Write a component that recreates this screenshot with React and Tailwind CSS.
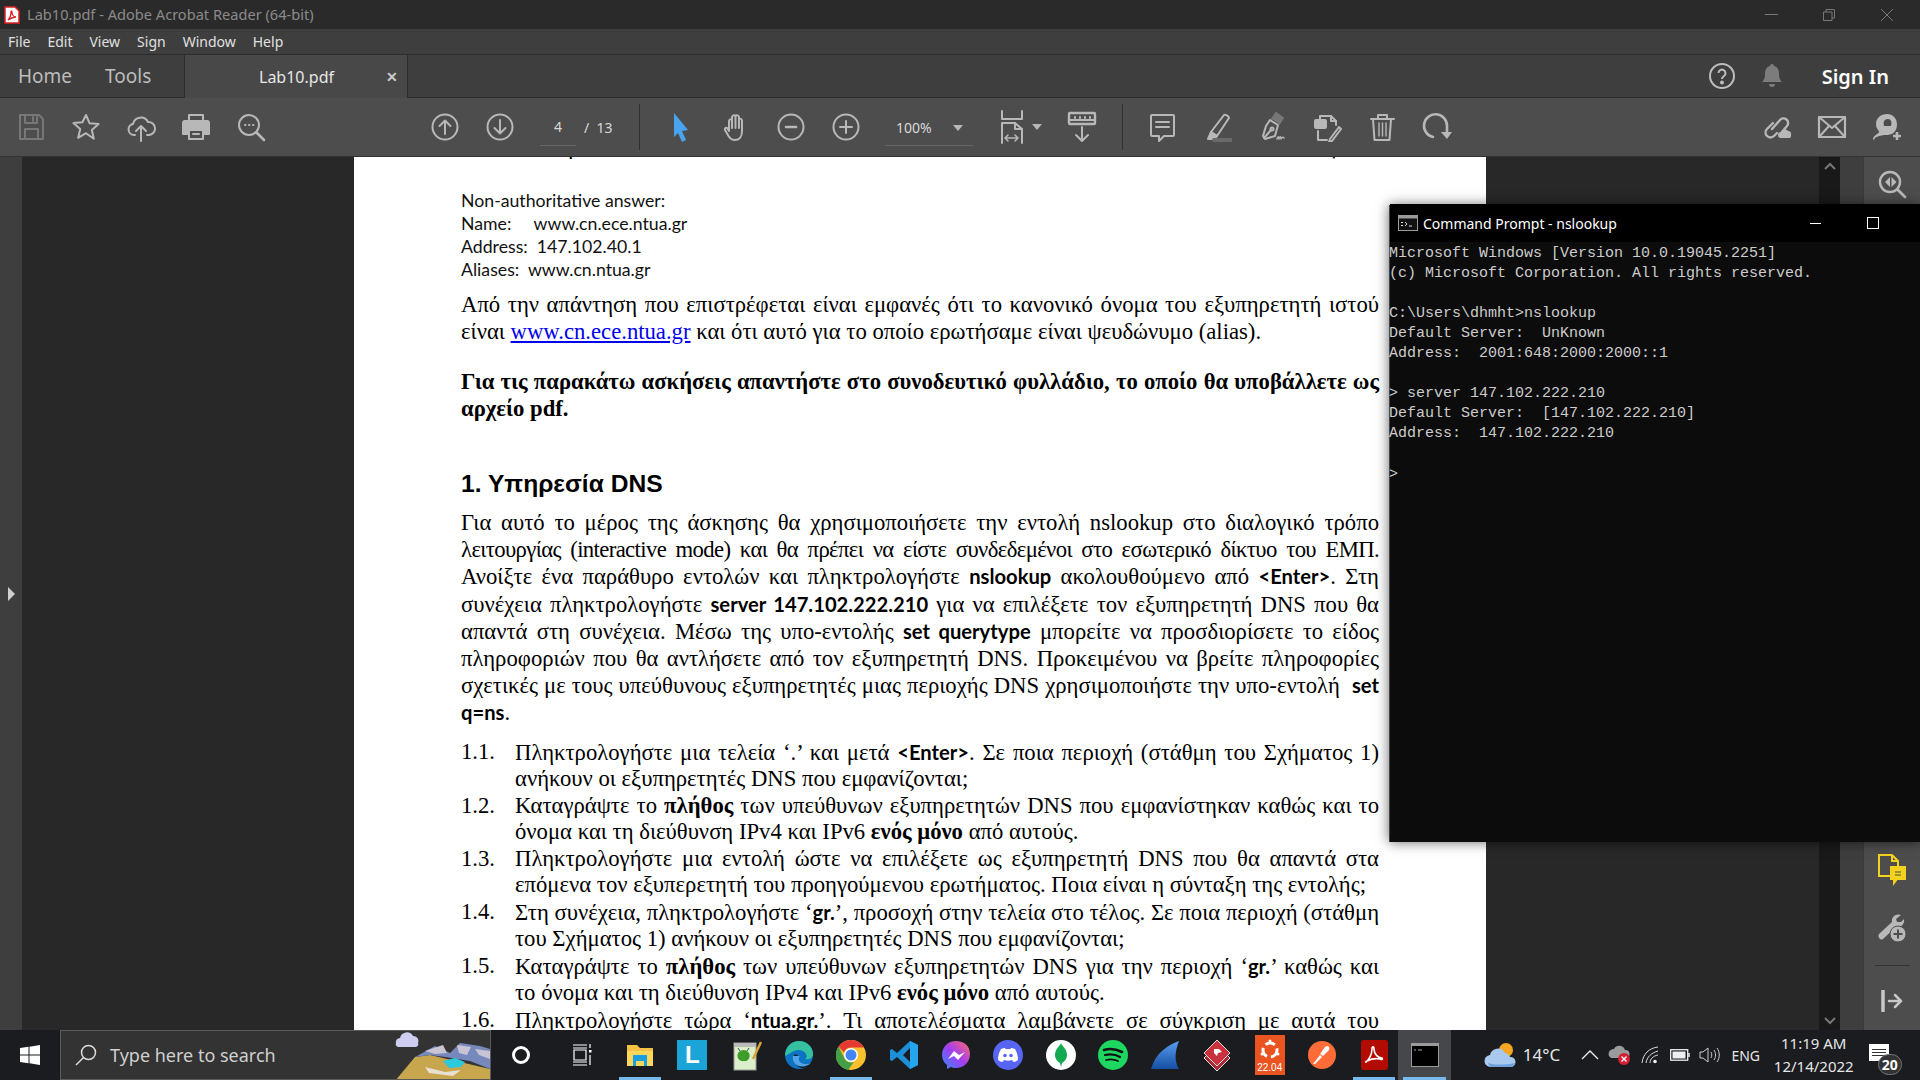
import React from "react";

const I = ({ s = 30, c = "#b8b8b8", w = 2, children, vb = "0 0 30 30", fill = "none" }) => (
  <svg width={s} height={s} viewBox={vb} fill={fill} stroke={c} strokeWidth={w} strokeLinecap="round" strokeLinejoin="round">{children}</svg>
);

const Slot = ({ children }) => <div className="w-[55px] shrink-0 flex items-center justify-center">{children}</div>;
const Sep = ({ cls }) => <div className={"w-px h-[46px] bg-[#303030] shrink-0 " + (cls || "")} />;

const Save = () => <I c="#777"><path d="M4 3h19l4 4v20H4z" /><path d="M9 3v8h12V3M9 27V17h13v10" /><path d="M17 5v4" /></I>;
const Star = () => <I><path d="M15 3l3.600 8.300 9 .8-6.800 5.900 2 8.800L15 21.200 7.200 25.800l2-8.800-6.800-5.900 9-.8z" /></I>;
const Cloud = () => <I><path d="M9 23H8a5.500 5.500 0 0 1-1-10.900A8 8 0 0 1 22 10a6.500 6.500 0 0 1 1 13h-2" /><path d="M15 29V14M10 19l5-5 5 5" /></I>;
const Print = () => (
  <I c="#b8b8b8"><path d="M8 9V3h14v6" /><path fill="#b8b8b8" d="M4 9h22a2 2 0 0 1 2 2v11h-5v-5H7v5H2V11a2 2 0 0 1 2-2z" /><path d="M8 18h14v9H8z" /><path d="M12 22h6" /></I>
);
const Find = () => <I><circle cx="13" cy="13" r="10" /><path d="M20.500 20.500L28 28" strokeWidth="2.600" /><path d="M9 13h.5M13 13h.5M17 13h.5" /></I>;
const Up = () => <I><circle cx="15" cy="15" r="12.500" /><path d="M15 22V8.500M9.500 14L15 8.500l5.500 5.500" /></I>;
const Down = () => <I><circle cx="15" cy="15" r="12.500" /><path d="M15 8v13.500M9.500 16l5.500 5.500 5.500-5.500" /></I>;
const Arrow = () => <svg width="20" height="30" viewBox="0 0 20 30"><path d="M3 1l14 17-6 1 4 9-4 2-4-9-4 4z" fill="#4aa3f0" /></svg>;
const Hand = () => <I><path d="M8 18V9a2 2 0 0 1 3-1.500V5a2 2 0 0 1 3.500-1A2 2 0 0 1 18 5v2a2 2 0 0 1 3 1.500V19c0 6-3 9-7 9-3.500 0-5-1.500-6.500-4L4 18c-.8-2 1.500-3 2.500-1.500L8 19" /><path d="M11 7v9M14.500 5v11M18 7v9" /></I>;
const Minus = () => <I><circle cx="15" cy="15" r="12.500" /><path d="M10 15h10" strokeWidth="2.600" /></I>;
const Plus = () => <I><circle cx="15" cy="15" r="12.500" /><path d="M9 15h12M15 9v12" /></I>;
const Fit = () => <I s={34} vb="0 0 34 34"><path d="M4 1v8h20V1" /><path d="M4 13h13l7 6v14M4 13v20" /><path d="M17 13v6h7" /><path d="M7 28h13M10 25l-3 3 3 3M17 25l3 3-3 3" strokeWidth="1.500" /></I>;
const Ruler = () => (
  <I s={34} vb="0 0 34 34"><rect x="4" y="3" width="26" height="11" rx="1" strokeWidth="2.400" /><path d="M4 10h26" /><path d="M10 7v1M15 7v1M20 7v1M25 7v1" /><path d="M17 17v14M11 25l6 6 6-6" /></I>
);
const Comment = () => <I><path d="M5 3h21a1 1 0 0 1 1 1v19a1 1 0 0 1-1 1H17l-5 5v-5H5a1 1 0 0 1-1-1V4a1 1 0 0 1 1-1z" /><path d="M9 10h13M9 15h13" /></I>;
const Highlight = () => <I><path d="M9 20L22 3c1-1 5 1 5 3L15 24z" /><path d="M9 20l6 4-3 3H6z" fill="#b8b8b8" /><path d="M12 28h17" stroke="#6a6a6a" strokeWidth="4" /></I>;
const Sign = () => <I><path d="M13 8l8 5-3 11-10 3-2-3 3-10z" /><path d="M7 26l7-8" /><circle cx="15" cy="17" r="1.500" /><path d="M15 7l4-6 7 5-4 6" fill="#777" stroke="#777" /><path d="M20 27c1-3 2-3 2 0 1-3 2-3 2 0 1-2 2-2 3-1" strokeWidth="1.500" /></I>;
const Stamp = () => <I><path d="M8 8V4h11l5 5v4" /><path d="M19 4v5h5" /><rect x="3" y="8" width="11" height="8" rx="1" fill="#b8b8b8" /><path d="M6 19v9h9" /><path d="M18 27l-1 3 3-1L29 17l-2-2z" /></I>;
const Trash = () => <I><path d="M4 7h23M11 7V3h9v4" /><path d="M6 7l1.500 21h15L24 7" /><path d="M12 11v13M15.500 11v13M19 11v13" strokeWidth="1.400" /></I>;
const Rotate = () => <I><path d="M11 25A11.500 11.500 0 1 1 25 14v7" strokeWidth="2.600" /><path d="M19 20h11l-5 7z" fill="#b8b8b8" stroke="none" /></I>;
const Link = () => <I s={32} vb="0 0 32 32"><path d="M12 12l-6 6a4.500 4.500 0 0 0 7 7l3-3" strokeWidth="2.400" /><path d="M11 18l8-9a4.500 4.500 0 0 1 7 6l-5 6" strokeWidth="2.400" /><path d="M17 24a3 3 0 0 1 3-3 4 4 0 0 1 7-1 3 3 0 0 1 3 4 3 3 0 0 1-1 3H19a3 3 0 0 1-2-3z" fill="#b8b8b8" stroke="none" /></I>;
const Mail = () => <I s={32} vb="0 0 32 32"><rect x="3" y="6" width="26" height="20" strokeWidth="2.200" /><path d="M3 6l13 11L29 6M3 26l10-11M29 26L19 15" /></I>;
const User = () => (
  <svg width="32" height="32" viewBox="0 0 32 32"><path d="M16 3c6 0 10 4 10 11 0 4-2 7-5 9-3 1-6 1-8 1-6 1-9 2-10 5-2-1-1-3 3-6 2-1 3-2 1-4-1-2-2-3-2-6C5 7 10 3 16 3z" fill="#b8b8b8" /><path d="M22 25h8M26 21v8" stroke="#b8b8b8" strokeWidth="2.600" /><path d="M13 15c-1-4 0-7 4-7 3 0 4 3 3 7" fill="#4c4c4c" /></svg>
);

const Caret = () => <div className="w-0 h-0 border-x-[5px] border-x-transparent border-t-[6px] border-t-[#b8b8b8]" />;

const Toolbar = () => (
  <div className="h-[59px] bg-[#4d4d4d] flex items-center pl-[3px] pr-[6px] border-b border-[#333] text-[#d8d8d8] font-['Noto_Sans',sans-serif] shrink-0">
    <Slot><Save /></Slot><Slot><Star /></Slot><Slot><Cloud /></Slot><Slot><Print /></Slot><Slot><Find /></Slot>
    <div className="w-[139px] shrink-0" />
    <Slot><Up /></Slot><Slot><Down /></Slot>
    <div className="w-[36px] ml-[13px] h-[36px] border-b border-[#666] text-center text-[14px] leading-[34px] shrink-0 translate-y-[1px]">4</div>
    <div className="ml-[8px] text-[14px] w-[55px] shrink-0">/&nbsp;&nbsp;13</div>
    <Sep />
    <div className="w-[13px] shrink-0" />
    <Slot><Arrow /></Slot><Slot><Hand /></Slot><Slot><Minus /></Slot><Slot><Plus /></Slot>
    <div className="w-[88px] ml-[12px] h-[36px] border-b border-[#666] flex items-center justify-between pl-[11px] pr-[10px] text-[14px] shrink-0 translate-y-[1px]"><span>100%</span><Caret /></div>
    <div className="w-[25px] shrink-0" />
    <div className="w-[34px] shrink-0 flex justify-center"><Fit /></div>
    <div className="shrink-0"><Caret /></div>
    <div className="w-[15px] shrink-0" />
    <div className="w-[50px] shrink-0 flex justify-center"><Ruler /></div>
    <div className="w-[15px] shrink-0" />
    <Sep />
    <div className="w-[11px] shrink-0" />
    <Slot><Comment /></Slot><Slot><Highlight /></Slot><Slot><Sign /></Slot><Slot><Stamp /></Slot><Slot><Trash /></Slot><Slot><Rotate /></Slot>
    <div className="flex-1" />
    <Slot><Link /></Slot><Slot><Mail /></Slot><Slot><User /></Slot>
  </div>
);

const B = ({ children }) => <span className="font-['Lato',sans-serif] font-bold text-[20.2px]">{children}</span>;

const Line = ({ children, cls }) => <div className={"text-justify [text-align-last:justify] " + (cls || "")}>{children}</div>;

const items = [
  ["1.1.", <>Πληκτρολογήστε μια τελεία ‘.’ και μετά <B>&lt;Enter&gt;</B>. Σε ποια περιοχή (στάθμη του Σχήματος 1) ανήκουν οι εξυπηρετητές DNS που εμφανίζονται;</>],
  ["1.2.", <>Καταγράψτε το <b>πλήθος</b> των υπεύθυνων εξυπηρετητών DNS που εμφανίστηκαν καθώς και το όνομα και τη διεύθυνση IPv4 και IPv6 <b>ενός μόνο</b> από αυτούς.</>],
  ["1.3.", <>Πληκτρολογήστε μια εντολή ώστε να επιλέξετε ως εξυπηρετητή DNS που θα απαντά στα επόμενα τον εξυπερετητή του προηγούμενου ερωτήματος. Ποια είναι η σύνταξη της εντολής;</>],
  ["1.4.", <>Στη συνέχεια, πληκτρολογήστε ‘<B>gr.</B>’, προσοχή στην τελεία στο τέλος. Σε ποια περιοχή (στάθμη του Σχήματος 1) ανήκουν οι εξυπηρετητές DNS που εμφανίζονται;</>],
  ["1.5.", <>Καταγράψτε το <b>πλήθος</b> των υπεύθυνων εξυπηρετητών DNS για την περιοχή ‘<B>gr.</B>’ καθώς και το&nbsp;όνομα και τη διεύθυνση IPv4 και IPv6 <b>ενός μόνο</b> από αυτούς.</>],
  ["1.6.", <>Πληκτρολογήστε τώρα ‘<B>ntua.gr.</B>’. Τι αποτελέσματα λαμβάνετε σε σύγκριση με αυτά του ερωτήματος 1.4;</>],
];

const Page = () => (
  <div className="w-[1132px] shrink-0 h-full bg-white overflow-hidden px-[107px] text-black font-['Liberation_Serif',serif] text-[22.7px]">
    <div className="flex justify-between -mt-[19px] h-[23px] font-bold text-[17px] leading-[23px] font-['Lato',sans-serif]">
      <span>Δίκτυα Υπολογιστών Lab</span><span>Ακ. έτος 2022</span>
    </div>
    <div className="mt-[28px] font-['Lato',sans-serif] text-[17.7px] leading-[23px] text-[#111]">
      <div>Non-authoritative answer:</div>
      <div>Name:&nbsp;&nbsp;&nbsp;&nbsp;&nbsp;www.cn.ece.ntua.gr</div>
      <div>Address:&nbsp;&nbsp;147.102.40.1</div>
      <div>Aliases:&nbsp;&nbsp;www.cn.ntua.gr</div>
    </div>
    <p className="mt-[10px] text-justify leading-[27px]">Από την απάντηση που επιστρέφεται είναι εμφανές ότι το κανονικό όνομα του εξυπηρετητή ιστού είναι <span className="text-[#0000ee] underline">www.cn.ece.ntua.gr</span> και ότι αυτό για το οποίο ερωτήσαμε είναι ψευδώνυμο (alias).</p>
    <p className="mt-[23px] text-justify leading-[27px] font-bold">Για τις παρακάτω ασκήσεις απαντήστε στο συνοδευτικό φυλλάδιο, το οποίο θα υποβάλλετε ως αρχείο pdf.</p>
    <h1 className="mt-[47px] font-['Liberation_Sans',sans-serif] font-bold text-[24.6px] leading-[30px]">1. Υπηρεσία DNS</h1>
    <div className="mt-[10px] leading-[27.2px]">
      <Line>Για αυτό το μέρος της άσκησης θα χρησιμοποιήσετε την εντολή nslookup στο διαλογικό τρόπο</Line>
      <Line cls="tracking-[-0.62px]">λειτουργίας (interactive mode) και θα πρέπει να είστε συνδεδεμένοι στο εσωτερικό δίκτυο του ΕΜΠ.</Line>
      <Line>Ανοίξτε ένα παράθυρο εντολών και πληκτρολογήστε <B>nslookup</B> ακολουθούμενο από <B>&lt;Enter&gt;</B>. Στη</Line>
      <Line>συνέχεια πληκτρολογήστε <B>server 147.102.222.210</B> για να επιλέξετε τον εξυπηρετητή DNS που θα</Line>
      <Line>απαντά στη συνέχεια. Μέσω της υπο-εντολής <B>set querytype</B> μπορείτε να προσδιορίσετε το είδος</Line>
      <Line>πληροφοριών που θα αντλήσετε από τον εξυπηρετητή DNS. Προκειμένου να βρείτε πληροφορίες</Line>
      <Line>σχετικές με τους υπεύθυνους εξυπηρετητές μιας περιοχής DNS χρησιμοποιήστε την υπο-εντολή &nbsp;<B>set</B></Line>
      <div><B>q=ns</B>.</div>
    </div>
    <div className="mt-[12px] leading-[26.5px]">
      {items.map(([n, t]) => (
        <div key={n} className="flex">
          <div className="w-[54px] shrink-0">{n}</div>
          <div className="flex-1 text-justify">{t}</div>
        </div>
      ))}
    </div>
  </div>
);

const Terminal = () => (
  <div className="absolute left-[1389px] top-[205px] w-[531px] h-[637px] bg-[#0c0c0c] shadow-[0_0_12px_rgba(0,0,0,0.6)] border-l border-[#444]">
    <div className="h-[38px] bg-black flex items-center pl-[8px] text-white font-['Noto_Sans',sans-serif] text-[14px] -translate-y-[1px]">
      <svg width="20" height="16" viewBox="0 0 20 16" className="mr-[5px]"><rect x="0.500" y="0.500" width="19" height="15" fill="#111" stroke="#999" /><rect x="1" y="1" width="18" height="2.500" fill="#999" /><path d="M3 7.500h2M3 10.500h2M7 7l2 2-2 2M11 11h3" stroke="#ddd" strokeWidth="1" fill="none" /></svg>
      <span>Command Prompt - nslookup</span>
      <div className="ml-auto w-[11px] h-px bg-white mr-[46px]" />
      <div className="w-[12px] h-[12px] border border-white mr-[41px]" />
    </div>
    <pre className="font-['Liberation_Mono',monospace] text-[15px] leading-[20.05px] text-[#cccccc] mt-[1px] -ml-[1px]">{`Microsoft Windows [Version 10.0.19045.2251]
(c) Microsoft Corporation. All rights reserved.

C:\\Users\\dhmht>nslookup
Default Server:  UnKnown
Address:  2001:648:2000:2000::1

> server 147.102.222.210
Default Server:  [147.102.222.210]
Address:  147.102.222.210

>`}</pre>
  </div>
);

const TB = ({ children, active, bg }) => (
  <div className={"w-[52.3px] shrink-0 h-full relative flex items-center justify-center " + (bg || "")}>
    {children}
    {active && <div className="absolute bottom-0 left-[5px] right-[5px] h-[3px] bg-[#76b9ed]" />}
  </div>
);

const Explorer = () => (
  <svg width="28" height="28" viewBox="0 0 28 28"><path d="M1 4h10l3 3h13v18H1z" fill="#f3c243" /><path d="M1 10h26v15H1z" fill="#fbd75b" /><path d="M7 14h14v11h-3v-5h-8v5H7z" fill="#1b9de2" /><path d="M10 20h8v5h-8z" fill="#fbd75b" /></svg>
);
const LIcon = () => <div className="w-[30px] h-[30px] bg-[#1ba4d8] flex items-center justify-center text-white font-bold text-[24px] leading-none font-['Liberation_Sans',sans-serif]"><span>L</span></div>;
const NotepadPP = () => (
  <svg width="30" height="32" viewBox="0 0 30 32"><rect x="2" y="4" width="22" height="27" fill="#dcefc8" stroke="#9a9a9a" /><path d="M2 4h22v4H2z" fill="#bbb" /><path d="M6 14c3-4 8-4 11 0 2 4-1 9-5 8-4 1-8-3-6-8z" fill="#3d9c2c" /><path d="M8 12l-2-3M15 12l2-3" stroke="#255" /><path d="M21 20L29 3" stroke="#d4a537" strokeWidth="2.500" /></svg>
);
const Edge = () => (
  <svg width="30" height="30" viewBox="0 0 30 30"><circle cx="15" cy="15" r="14" fill="#0c74c4" /><path d="M1 15C2 6 8 1 15 1c8 0 14 6 14 13 0 4-4 6-8 5 2-1 2-3 1-5-2-4-8-5-12-3-5 2-8 6-9 4z" fill="#35c1a0" /><path d="M10 15c-2 5 1 11 7 13 6 0 9-2 11-6-4 3-9 3-12 1-3-2-3-5-2-7 1-1-3-3-4-1z" fill="#1b1c20" opacity="0.9" /><path d="M9 16c-1 5 2 9 6 10 4 1 9 0 12-3-4 2-9 1-11-1-2-3-1-5 0-6z" fill="#53a4e6" /></svg>
);
const Chrome = () => (
  <svg width="30" height="30" viewBox="0 0 30 30"><circle cx="15" cy="15" r="15" fill="#fbc02d" /><path d="M15 0a15 15 0 0 1 13 7.500H15a7.500 7.500 0 0 0-7 5L2.500 6.500A15 15 0 0 1 15 0z" fill="#e53935" /><path d="M2.500 6.500L8.500 18.500a7.500 7.500 0 0 0 9.500 3.500L12 30A15 15 0 0 1 2.500 6.500z" fill="#43a047" /><circle cx="15" cy="15" r="7" fill="#fff" /><circle cx="15" cy="15" r="5.500" fill="#4285f4" /></svg>
);
const VSCode = () => (
  <svg width="30" height="30" viewBox="0 0 30 30"><path d="M21 1l8 4v20l-8 4L8 17 3 21l-2-1V10l2-1 5 4z" fill="#1c8fd8" /><path d="M21 8l-7 7 7 7z" fill="#1b1c20" /><path d="M21 1l8 4v20l-8 4z" fill="#26a5ef" /></svg>
);
const Messenger = () => (
  <svg width="30" height="30" viewBox="0 0 30 30"><defs><linearGradient id="mg" x1="0" y1="1" x2="1" y2="0"><stop offset="0" stopColor="#2f8bff" /><stop offset="0.5" stopColor="#a33df0" /><stop offset="1" stopColor="#ff6a6a" /></linearGradient></defs><path d="M15 1C7 1 1 7 1 15c0 4 2 8 5 10v4l4-2c2 1 3 1 5 1 8 0 14-6 14-14S23 1 15 1z" fill="url(#mg)" /><path d="M7 19l6-8 5 4 6-3-7 8-4-4z" fill="#fff" /></svg>
);
const Discord = () => (
  <div className="w-[30px] h-[30px] rounded-full bg-[#5865f2] flex items-center justify-center">
    <svg width="20" height="16" viewBox="0 0 20 16"><path d="M3 2c2-1 3-1 4-1l.5 1h5L13 1c1 0 2 0 4 1 2 3 3 7 3 11-1.500 1-3 2-4.500 2L14 13c-3 1-5 1-8 0l-1.500 2C3 15 1.500 14 0 13 0 9 1 5 3 2z" fill="#fff" /><circle cx="7" cy="8.500" r="1.800" fill="#5865f2" /><circle cx="13" cy="8.500" r="1.800" fill="#5865f2" /></svg>
  </div>
);
const Mongo = () => (
  <div className="w-[30px] h-[30px] rounded-full bg-white flex items-center justify-center">
    <svg width="12" height="24" viewBox="0 0 12 24"><path d="M6 0c1 3 6 6 6 12 0 4-3 7-5 8l-1 4-1-4c-2-1-5-4-5-8C0 6 5 3 6 0z" fill="#13aa52" /></svg>
  </div>
);
const Spotify = () => (
  <div className="w-[30px] h-[30px] rounded-full bg-[#1ed760] flex items-center justify-center">
    <svg width="22" height="18" viewBox="0 0 22 18" fill="none" stroke="#111" strokeLinecap="round"><path d="M2 4c6-2 12-1 18 2" strokeWidth="2.600" /><path d="M3 9c5-1 10-1 15 2" strokeWidth="2.200" /><path d="M4 14c4-1 8-1 12 1" strokeWidth="1.800" /></svg>
  </div>
);
const Wireshark = () => (
  <svg width="32" height="32" viewBox="0 0 32 32"><defs><linearGradient id="ws" x1="0" y1="0" x2="0" y2="1"><stop offset="0" stopColor="#5b9cf0" /><stop offset="1" stopColor="#144fa3" /></linearGradient></defs><path d="M30 2C18 6 6 15 2 30h28c-5-8-4-18 0-28z" fill="url(#ws)" /></svg>
);
const RedDiamond = () => (
  <svg width="28" height="32" viewBox="0 0 28 32"><path d="M14 6l13 13-13 13L1 19z" fill="#a72b35" stroke="#ddd" /><path d="M14 1l13 13-13 13L1 14z" fill="#c9313f" stroke="#ddd" /><path d="M11 10h5l3 3-4 1-1 3-3-3z" fill="#fff" /></svg>
);
const Ubuntu = () => (
  <div className="w-[30px] h-[40px] bg-[#e95420] flex flex-col items-center justify-start pt-[3px] text-white font-['Liberation_Sans',sans-serif] text-[10px] leading-none">
    <svg width="24" height="24" viewBox="0 0 24 24" fill="none" stroke="#fff" strokeWidth="3"><circle cx="12" cy="12" r="7" strokeDasharray="10 4" /><circle cx="12" cy="3" r="1.500" fill="#fff" stroke="none" /><circle cx="4" cy="16" r="1.500" fill="#fff" stroke="none" /><circle cx="20" cy="16" r="1.500" fill="#fff" stroke="none" /></svg>
    <span className="mt-[1px]">22.04</span>
  </div>
);
const Postman = () => (
  <div className="w-[28px] h-[28px] rounded-full bg-[#ff6c37] flex items-center justify-center">
    <svg width="18" height="20" viewBox="0 0 18 20"><path d="M14 1c2 0 3 2 2 4l-6 6-3-2 5-7zM7 10l2 2-7 7H0z" fill="#fff" /></svg>
  </div>
);
const AcroIcon = () => (
  <div className="w-[27px] h-[30px] rounded-[3px] bg-[#b30b00] flex items-center justify-center">
    <svg width="20" height="20" viewBox="0 0 20 20" fill="none" stroke="#fff" strokeWidth="1.600"><path d="M2 17c3-2 6-8 6-13 0-3 2-3 2 0 0 5 4 9 8 9 1 1 0 2-2 1-5-1-9 0-13 2-1 1-2 1-1 1z" /></svg>
  </div>
);
const SearchArt = () => (
  <svg width="95" height="50" viewBox="0 0 95 50" className="absolute right-0 top-0">
    <path d="M0 50L20 26 35 24 95 38V50z" fill="#c7a64d" />
    <path d="M20 26L40 15 55 22 65 12 85 15 95 18V38L75 30 50 26 35 24z" fill="#7788bd" />
    <path d="M30 20L48 14l4 8-12 1zM62 14l14 2-4 8-8-2zM80 18l15 2v8l-11-4z" fill="#c9c4d4" />
    <path d="M48 30l12-3 10 4-4 5-12 1z" fill="#2dc9dc" />
    <path d="M30 36l20 5 16-2-8 6-24-3z" fill="#e8e0d0" />
    <path d="M1 14a4 4 0 0 1 4-5 7 7 0 0 1 13-2 5 5 0 0 1 5 7 3 3 0 0 1-2 4H3a3 3 0 0 1-2-4z" fill="#cfcdf0" transform="translate(0 -2)" />
  </svg>
);

const Taskbar = () => (
  <div className="h-[50px] bg-[#1a1c20] flex items-stretch text-white font-['Noto_Sans',sans-serif] shrink-0">
    <div className="w-[60px] shrink-0 flex items-center justify-center">
      <svg width="20" height="20" viewBox="0 0 20 20" fill="#fff"><path d="M0 3l8.500-1.200v7.700H0zM9.500 1.700L20 0v9.500H9.500zM0 10.500h8.500v7.700L0 17zM9.500 10.500H20V20L9.500 18.300z" /></svg>
    </div>
    <div className="w-[431px] shrink-0 relative bg-[#333333] border border-[#5a5a5a] flex items-center pl-[13px] overflow-hidden">
      <svg width="24" height="24" viewBox="0 0 24 24" fill="none" stroke="#ddd" strokeWidth="1.500"><circle cx="14.500" cy="9.500" r="7" /><path d="M9.500 14.500L2 22" /></svg>
      <span className="ml-[12px] text-[18px] text-[#cfcfcf]">Type here to search</span>
      <SearchArt />
    </div>
    <div className="w-[59px] shrink-0 flex items-center justify-center"><div className="w-[18px] h-[18px] rounded-full border-[3px] border-white" /></div>
    <div className="w-[64px] shrink-0 flex items-center justify-center">
      <svg width="20" height="24" viewBox="0 0 20 24" fill="none" stroke="#fff" strokeWidth="1.200"><path d="M1 2h14M1 5h14M2 7h12v10H2zM1 19h14M1 22h14" /><rect x="17" y="7" width="2.500" height="2.500" fill="#fff" stroke="none" /><path d="M18 1v4M18 12v10" /></svg>
    </div>
    <TB active><Explorer /></TB>
    <TB><LIcon /></TB>
    <div className="w-[2px] shrink-0" />
    <TB><NotepadPP /></TB>
    <TB><Edge /></TB>
    <TB active><Chrome /></TB>
    <TB><VSCode /></TB>
    <TB><Messenger /></TB>
    <TB><Discord /></TB>
    <TB><Mongo /></TB>
    <TB><Spotify /></TB>
    <TB><Wireshark /></TB>
    <TB><RedDiamond /></TB>
    <TB><Ubuntu /></TB>
    <TB><Postman /></TB>
    <TB active><AcroIcon /></TB>
    <TB active bg="bg-[#45474a] -ml-[2px]">
      <svg width="28" height="24" viewBox="0 0 28 24"><rect x="0.500" y="0.500" width="27" height="23" fill="#000" stroke="#9a9a9a" /><rect x="1" y="1" width="26" height="2" fill="#9a9a9a" /><path d="M3 7h2M7 7h4" stroke="#aaa" /></svg>
    </TB>
    <div className="w-[30px] shrink-0" />
    <div className="w-[38px] shrink-0 flex items-center justify-center">
      <svg width="32" height="28" viewBox="0 0 32 28"><circle cx="22" cy="9" r="7" fill="#f5a623" /><path d="M7 26a6 6 0 0 1-1-12 8 8 0 0 1 15-2 6 6 0 0 1 5 4 5 5 0 0 1 1 10z" fill="#a9c9ee" /><path d="M7 26a6 6 0 0 1-3-4c6 2 16 2 27 0a5 5 0 0 1-4 4z" fill="#6ea3df" /></svg>
    </div>
    <div className="w-[48px] shrink-0 flex items-center pl-[4px] text-[17px] text-[#e6e6e6]">14°C</div>
    <div className="w-[24px] ml-[11px] shrink-0 flex items-center justify-center">
      <svg width="18" height="10" viewBox="0 0 18 10" fill="none" stroke="#eee" strokeWidth="1.300"><path d="M1 9l8-8 8 8" /></svg>
    </div>
    <div className="w-[30px] ml-[3px] shrink-0 flex items-center justify-center relative">
      <svg width="24" height="22" viewBox="0 0 24 22"><path d="M1 12a5 5 0 0 1 5-7 6 6 0 0 1 11 1 4 4 0 0 1 1 8H3z" fill="#9a9a9a" /><circle cx="16" cy="15" r="6" fill="#d41f33" /><path d="M13.500 12.500l5 5M18.500 12.500l-5 5" stroke="#fff" strokeWidth="1.300" /></svg>
    </div>
    <div className="w-[30px] shrink-0 flex items-center justify-center">
      <svg width="18" height="18" viewBox="0 0 18 18" fill="none" stroke="#ddd" strokeWidth="1"><path d="M1 17C2 8 8 2 17 1M5 17c1-6 5-10 12-12M9 17c0-4 3-7 8-8" /><circle cx="14" cy="15.500" r="1.800" fill="#eee" stroke="none" /></svg>
    </div>
    <div className="w-[30px] shrink-0 flex items-center justify-center">
      <svg width="20" height="12" viewBox="0 0 20 12" fill="none"><rect x="0.700" y="0.700" width="17" height="10.500" stroke="#eee" strokeWidth="1.300" /><rect x="2.500" y="2.500" width="13" height="7" fill="#eee" /><path d="M19 4v4" stroke="#eee" strokeWidth="1.500" /></svg>
    </div>
    <div className="w-[30px] shrink-0 flex items-center justify-center">
      <svg width="22" height="18" viewBox="0 0 22 18" fill="none" stroke="#ccc" strokeWidth="1"><path d="M1 6h3l5-4v14l-5-4H1zM12 6c1 2 1 4 0 6M15 4c2 3 2 7 0 10M18 2c3 4 3 10 0 14" /></svg>
    </div>
    <div className="w-[38px] ml-[2px] shrink-0 flex items-center justify-center text-[14px] text-[#e6e6e6]">ENG</div>
    <div className="w-[98px] shrink-0 flex flex-col items-center justify-center text-[15px] leading-[23px] text-[#e6e6e6]"><span>11:19 AM</span><span>12/14/2022</span></div>
    <div className="flex-1 relative flex items-center pl-[6px]">
      <div className="w-[20px] h-[17px] bg-white flex flex-col gap-[2px] justify-center px-[3px] -translate-y-[3px]"><div className="h-px bg-[#333]" /><div className="h-px bg-[#333]" /><div className="h-px bg-[#333]" /></div>
      <div className="absolute left-[15px] top-[24px] w-[24px] h-[21px] rounded-full bg-[#333] border border-[#777] flex items-center justify-center text-[14px] font-bold leading-none">20</div>
    </div>
  </div>
);

export default function App() {
  return (
    <div className="w-[1920px] h-[1080px] relative overflow-hidden flex flex-col bg-[#282828] font-['Noto_Sans',sans-serif]">
      <div className="h-[29px] bg-[#2a2a2a] flex items-center shrink-0">
        <svg width="16" height="18" viewBox="0 0 16 18" className="ml-[4px] mr-[7px]"><path d="M1 1h10l4 4v12H1z" fill="#fff" stroke="#e02020" strokeWidth="1.500" /><path d="M4 14c2-2 3-5 3-8 0-1 1-1 1 0 0 3 2 5 4 5-2 0-5 1-8 3z" fill="none" stroke="#e02020" strokeWidth="1.300" /></svg>
        <span className="text-[14.600px] text-[#8a8a8a]">Lab10.pdf - Adobe Acrobat Reader (64-bit)</span>
        <div className="ml-auto flex items-center pr-[3px]">
          <div className="w-[57px] flex justify-center"><div className="w-[13px] h-px bg-[#777]" /></div>
          <div className="w-[57px] flex justify-center"><svg width="12" height="12" viewBox="0 0 12 12" fill="none" stroke="#777"><path d="M.5 3h8.500v8.500H.5zM3 3V.5h8.500V9H9" /></svg></div>
          <div className="w-[60px] flex justify-center"><svg width="14" height="14" viewBox="0 0 14 14" stroke="#777"><path d="M1 1l12 12M13 1L1 13" /></svg></div>
        </div>
      </div>
      <div className="h-[26px] bg-[#3e3e3e] border-b border-[#2c2c2c] flex items-center pl-[8px] gap-[17px] text-[14px] text-[#e0e0e0] shrink-0">
        <span>File</span><span>Edit</span><span>View</span><span>Sign</span><span>Window</span><span>Help</span>
      </div>
      <div className="h-[43px] bg-[#3e3e3e] flex items-stretch shrink-0">
        <div className="w-[184px] border-b border-[#2c2c2c] flex items-center pl-[18px] gap-[33px] text-[19px] text-[#bdbdbd]"><span>Home</span><span>Tools</span></div>
        <div className="w-[224px] bg-[#484848] border-l border-r border-[#2c2c2c] flex items-center text-[#e6e6e6] text-[16px] pl-[74px]">
          <span>Lab10.pdf</span>
          <span className="ml-[auto] mr-[9px] text-[14px] font-bold text-[#ccc]">✕</span>
        </div>
        <div className="flex-1 border-b border-[#2c2c2c] flex items-center justify-end">
          <svg width="28" height="28" viewBox="0 0 28 28" fill="none" stroke="#bdbdbd" strokeWidth="2" className="mr-[25px]"><circle cx="14" cy="14" r="12" /><path d="M10.500 11a3.500 3.500 0 1 1 5.500 3c-1.500 1-2 1.500-2 3" /><circle cx="14" cy="20.500" r="1" fill="#bdbdbd" /></svg>
          <svg width="22" height="26" viewBox="0 0 22 26" fill="#7c7c7c" className="mr-[39px]"><path d="M11 1c1.500 0 2 1 2 2 4 1 5 4 5 8 0 4 1 6 3 8H1c2-2 3-4 3-8 0-4 1-7 5-8 0-1 .5-2 2-2z" /><path d="M8 21h6c0 2-1 3-3 3s-3-1-3-3z" /></svg>
          <span className="text-[20px] font-semibold text-white mr-[31px] translate-y-[1px]">Sign In</span>
        </div>
      </div>
      <Toolbar />
      <div className="flex-1 min-h-0 flex">
        <div className="w-[22px] shrink-0 bg-[#3e3e3e] flex items-center justify-center">
          <div className="w-0 h-0 border-y-[7px] border-y-transparent border-l-[7px] border-l-[#cfcfcf]" />
        </div>
        <div className="w-[332px] shrink-0 bg-[#282828]" />
        <Page />
        <div className="w-[333px] shrink-0 bg-[#282828]" />
        <div className="w-[21px] shrink-0 bg-[#191919] flex flex-col items-center justify-between py-[5px]">
          <svg width="12" height="8" viewBox="0 0 12 8" fill="none" stroke="#777" strokeWidth="2"><path d="M1 7l5-5 5 5" /></svg>
          <svg width="12" height="8" viewBox="0 0 12 8" fill="none" stroke="#777" strokeWidth="2"><path d="M1 1l5 5 5-5" /></svg>
        </div>
        <div className="w-[23px] shrink-0 bg-[#3e3e3e]" />
        <div className="flex-1 bg-[#4d4d4d] border-l border-[#3a3a3a] flex flex-col items-center pt-[12px] pb-[18px]">
          <I s={30}><circle cx="13" cy="13" r="10" strokeWidth="2.400" /><path d="M20.500 20.500L28 28" strokeWidth="2.800" /><path d="M13 8v10l-5-5zM14.500 8l5 5-5 5z" fill="#b8b8b8" stroke="none" /></I>
          <div className="flex-1" />
          <svg width="30" height="32" viewBox="0 0 30 32" fill="none" stroke="#f2d21f" strokeWidth="2" className="mb-[27px]"><path d="M16 22H2V1h13l6 6v5" /><path d="M15 1v6h6" /><path d="M14 13h14v12H20l-3 4v-4h-3z" fill="#f2d21f" /><path d="M18 18h6M18 21h6" stroke="#4d4d4d" strokeWidth="1.200" /></svg>
          <svg width="30" height="30" viewBox="0 0 30 30" className="mb-[22px]"><path d="M2 21L15 9c-1-5 4-9 9-7l-5 4 1 3 4 0 3-3c1 5-3 9-8 8L6 26c-2 2-6-2-4-5z" fill="#b8b8b8" /><circle cx="21" cy="21" r="8" fill="#b8b8b8" stroke="#4d4d4d" /><path d="M16.500 21h9M21 16.500v9" stroke="#4d4d4d" strokeWidth="2" /></svg>
          <div className="w-[35px] h-px bg-[#333] mb-[24px]" />
          <svg width="24" height="22" viewBox="0 0 24 22" fill="none" stroke="#c8c8c8" strokeWidth="2.500" strokeLinecap="round"><path d="M3 1v20" strokeWidth="3.500" /><path d="M9 11h12M15 5l6 6-6 6" /></svg>
        </div>
      </div>
      <Taskbar />
      <Terminal />
    </div>
  );
}
